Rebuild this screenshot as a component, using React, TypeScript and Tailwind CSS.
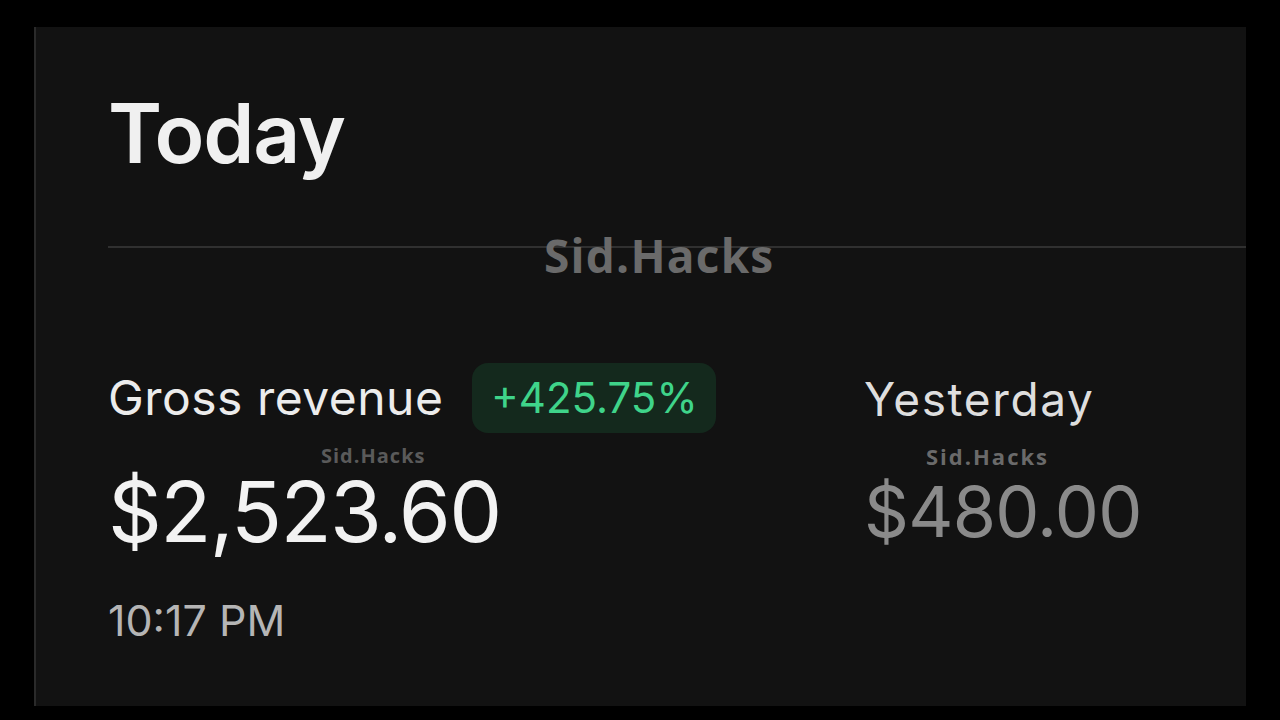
export default function App() {
  return (
    <div
      className="relative h-[720px] w-[1280px] overflow-hidden bg-black pl-[34px] pt-[27px]"
      style={{ fontFamily: "Inter, 'Noto Sans', sans-serif" }}
    >
      <div className="relative flex h-[679px] w-[1212px] flex-col border-l-2 border-[#2a2a2a] bg-[#121212]">
        <div className="pl-[72px] pt-[66px]">
          <h1 className="text-[82px] font-semibold leading-none tracking-[-0.015em] text-[#f0f0f0]">Today</h1>
        </div>
        <div className="ml-[72px] mt-[71px] h-[2px] bg-[#303030]" />

        <div className="mt-[115px] grid grid-cols-[756px_1fr] pl-[72px]">
          <div className="flex flex-col">
            <div className="flex items-center gap-[29px]">
              <span className="text-[48px] leading-none tracking-[0.01em] text-[#ececec]">Gross revenue</span>
              <span className="flex h-[70px] w-[244px] items-center justify-center rounded-[16px] bg-[#14291d] text-[42px] leading-none text-[#3fd48a]">
                +425.75%
              </span>
            </div>
            <div className="mt-[37px] text-[84px] leading-none tracking-[-0.02em] text-[#f2f2f2]">$2,523.60</div>
            <div className="mt-[45px] text-[43px] leading-none text-[#b5b5b5]">10:17 PM</div>
          </div>
          <div className="flex flex-col pt-[13px]">
            <span className="text-[46px] leading-none tracking-[0.035em] text-[#dedede]">Yesterday</span>
            <div className="mt-[55px] text-[70px] leading-none tracking-[-0.01em] text-[#8a8a8a]">$480.00</div>
          </div>
        </div>
      </div>

      {/* watermarks */}
      <span
        className="absolute left-[544px] top-[232px] text-[46px] font-bold leading-none tracking-[1.2px] text-[#6a6a6a]"
        style={{ fontFamily: "'Open Sans', sans-serif" }}
      >
        Sid.Hacks
      </span>
      <span
        className="absolute left-[321px] top-[446px] text-[20px] font-bold leading-none tracking-[1px] text-[#5a5a5a]"
        style={{ fontFamily: "'Open Sans', sans-serif" }}
      >
        Sid.Hacks
      </span>
      <span
        className="absolute left-[926px] top-[445px] text-[22px] font-bold leading-none tracking-[2px] text-[#6a6a6a]"
        style={{ fontFamily: "'Open Sans', sans-serif" }}
      >
        Sid.Hacks
      </span>
    </div>
  );
}
